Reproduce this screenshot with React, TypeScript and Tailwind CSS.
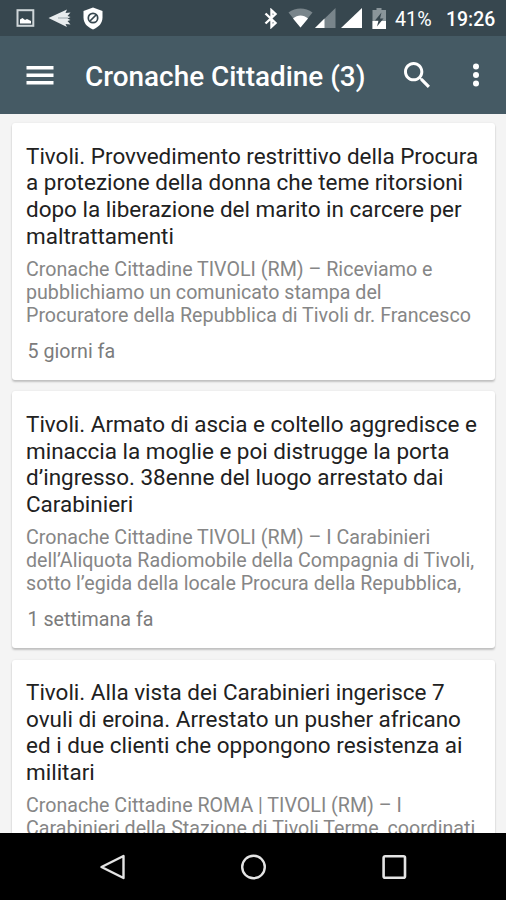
import React from 'react';

interface Article {
  title: string[];
  excerpt: string[];
  date: string;
}

const articles: Article[] = [
  {
    title: [
      'Tivoli. Provvedimento restrittivo della Procura',
      'a protezione della donna che teme ritorsioni',
      'dopo la liberazione del marito in carcere per',
      'maltrattamenti',
    ],
    excerpt: [
      'Cronache Cittadine TIVOLI (RM) – Riceviamo e',
      'pubblichiamo un comunicato stampa del',
      'Procuratore della Repubblica di Tivoli dr. Francesco',
    ],
    date: '5 giorni fa',
  },
  {
    title: [
      'Tivoli. Armato di ascia e coltello aggredisce e',
      'minaccia la moglie e poi distrugge la porta',
      'd’ingresso. 38enne del luogo arrestato dai',
      'Carabinieri',
    ],
    excerpt: [
      'Cronache Cittadine TIVOLI (RM) – I Carabinieri',
      'dell’Aliquota Radiomobile della Compagnia di Tivoli,',
      'sotto l’egida della locale Procura della Repubblica,',
    ],
    date: '1 settimana fa',
  },
  {
    title: [
      'Tivoli. Alla vista dei Carabinieri ingerisce 7',
      'ovuli di eroina. Arrestato un pusher africano',
      'ed i due clienti che oppongono resistenza ai',
      'militari',
    ],
    excerpt: [
      'Cronache Cittadine ROMA | TIVOLI (RM) – I',
      'Carabinieri della Stazione di Tivoli Terme, coordinati',
    ],
    date: '',
  },
];

function StatusBar() {
  return (
    <div className="flex h-9 shrink-0 items-center bg-[#37474f] pl-4 pr-[11px] text-white">
      <svg className="h-[18px] w-[19px]" viewBox="0 0 19 18" fill="none">
        <rect x="1.500" y="1.200" width="15.800" height="15.600" stroke="#cfd6d9" strokeWidth="2" />
        <path d="M4 14.500v-4l2.500-1.500 2.500 2 2-1 4 2v2.500Z" fill="#fff" />
      </svg>
      <svg className="ml-[13px] h-5 w-[23px]" viewBox="0 0 23 20" fill="#e8ecee">
        <path d="M.5 10 19 1.500l-1.500 3.500 5-.5-3 3.500 3 1-3 1.500 3 1.500-3 1 3 3.500-5-.5 1.500 3Z" />
        <path d="M10 10h10" stroke="#9aa6ab" strokeWidth="1" />
      </svg>
      <svg className="ml-[12px] h-[23px] w-[20px]" viewBox="0 0 20 23" fill="none">
        <path d="M10 .5 19.500 4v6.500c0 5.500-3.500 9.500-9.500 12-6-2.500-9.500-6.500-9.500-12V4Z" fill="#fff" />
        <circle cx="10" cy="11" r="4.700" stroke="#37474f" strokeWidth="1.700" />
        <path d="m7 14 6-6" stroke="#37474f" strokeWidth="1.700" />
      </svg>

      <svg className="ml-auto h-[21px] w-[14px]" viewBox="0 0 14 21" fill="none" stroke="#fff" strokeWidth="2.400">
        <path d="m1.500 5.500 10 9.500-4 3.700V2.300l4 3.700-10 9.500" />
      </svg>
      <svg className="ml-[10px] h-5 w-[25px]" viewBox="0 0 25 20">
        <path d="M.5 4.500C7.500-.8 17.500-.8 24.500 4.500L12.500 19.500Z" fill="#79858b" />
        <path d="M5 10.500c4.500-3.900 10.500-3.900 15 0l-7.500 9Z" fill="#fff" />
      </svg>
      <svg className="ml-[2px] h-5 w-[21px]" viewBox="0 0 21 20">
        <path d="M20.500 0v20H0Z" fill="#79858b" />
        <path d="M9.500 10.500V20H0Z" fill="#fff" />
      </svg>
      <svg className="ml-[5px] h-5 w-[22px]" viewBox="0 0 22 20">
        <path d="M21 0v20H0Z" fill="#fff" />
      </svg>
      <svg className="ml-[9px] h-[21px] w-[15px]" viewBox="0 0 15 21">
        <path d="M4.500 0h5v2H14v19H.5V2h4Z" fill="#8a959a" />
        <path d="M.5 13H14v8H.5Z" fill="#fff" />
        <path d="M9.500 4.500 3 12.500h3.500L5 18.500l6.500-8H8Z" fill="#37474f" />
      </svg>
      <span className="ml-[8px] mt-[3px] w-[39px] whitespace-nowrap text-[19.7px] leading-none">41%</span>
      <span className="ml-[12px] mt-[3px] w-[49px] whitespace-nowrap text-[19.4px] font-medium leading-none">19:26</span>
    </div>
  );
}

function AppBar() {
  return (
    <div className="flex h-[78px] shrink-0 items-center bg-[#455a64] pl-[26px] pr-[26px] text-white">
      <svg className="h-[19px] w-[28px]" viewBox="0 0 28 19" fill="#fff">
        <path d="M.5 0h27v3.500H.5ZM.5 7.500h27V11H.5ZM.5 15h27v3.500H.5Z" />
      </svg>
      <h1 className="ml-[31px] mt-[3px] whitespace-nowrap text-[27.9px] font-medium leading-none">
        Cronache Cittadine (3)
      </h1>
      <svg className="ml-auto h-[26px] w-[26px]" viewBox="3 3 17.500 17.500" fill="#fff">
        <path d="M15.500 14h-.79l-.28-.27C15.410 12.590 16 11.110 16 9.500 16 5.910 13.090 3 9.500 3S3 5.910 3 9.500 5.910 16 9.500 16c1.610 0 3.090-.59 4.230-1.570l.27.28v.79l5 4.990L20.490 19l-4.990-5zm-6 0C7.010 14 5 11.990 5 9.500S7.010 5 9.500 5 14 7.010 14 9.500 11.990 14 9.500 14z" />
      </svg>
      <svg className="ml-[43px] h-6 w-[7px]" viewBox="0 0 7 24" fill="#fff">
        <circle cx="3" cy="3.500" r="3" />
        <circle cx="3" cy="12" r="3" />
        <circle cx="3" cy="20.500" r="3" />
      </svg>
    </div>
  );
}

function ArticleCard({ article }: { article: Article }) {
  return (
    <article className="h-[256.5px] shrink-0 rounded-[3px] bg-white pl-[14px] pt-[19.4px] shadow-[0_2px_2px_rgba(0,0,0,0.2),0_0_2px_rgba(0,0,0,0.08)]">
      <h2 className="text-[22.48px] leading-[26.7px] text-[#212121]">
        {article.title.map((line) => (
          <span key={line} className="block whitespace-nowrap">{line}</span>
        ))}
      </h2>
      <p className="mt-[8.5px] text-[19.65px] leading-[23px] text-[#868686]">
        {article.excerpt.map((line) => (
          <span key={line} className="block whitespace-nowrap">{line}</span>
        ))}
      </p>
      <p className="ml-[1.5px] mt-[13px] text-[19.65px] leading-[23px] text-[#7c7c7c]">{article.date}</p>
    </article>
  );
}

function NavigationBar() {
  return (
    <div className="flex h-[67px] shrink-0 items-center justify-center gap-[115px] bg-black">
      <svg className="h-[26px] w-[26px]" viewBox="0 0 26 26" fill="none" stroke="#e4e4e4" strokeWidth="2.400" strokeLinejoin="round">
        <path d="M24.500 2v22L2.500 13Z" />
      </svg>
      <svg className="h-[26px] w-[26px]" viewBox="0 0 26 26" fill="none" stroke="#e4e4e4" strokeWidth="2.400">
        <circle cx="13.500" cy="13" r="11.300" />
      </svg>
      <svg className="h-[26px] w-[26px]" viewBox="0 0 26 26" fill="none" stroke="#e4e4e4" strokeWidth="2.600">
        <rect x="2.600" y="2.300" width="21.400" height="21.400" rx="1.500" />
      </svg>
    </div>
  );
}

export default function App() {
  return (
    <div className="flex h-[900px] w-[506px] flex-col overflow-hidden bg-[#f4f4f4] font-['Roboto',sans-serif]">
      <StatusBar />
      <AppBar />
      <main className="flex min-h-0 flex-1 flex-col gap-[11.6px] overflow-hidden pl-3 pr-[11px] pt-[9.4px]">
        {articles.map((article) => (
          <ArticleCard key={article.title[0]} article={article} />
        ))}
      </main>
      <NavigationBar />
    </div>
  );
}
